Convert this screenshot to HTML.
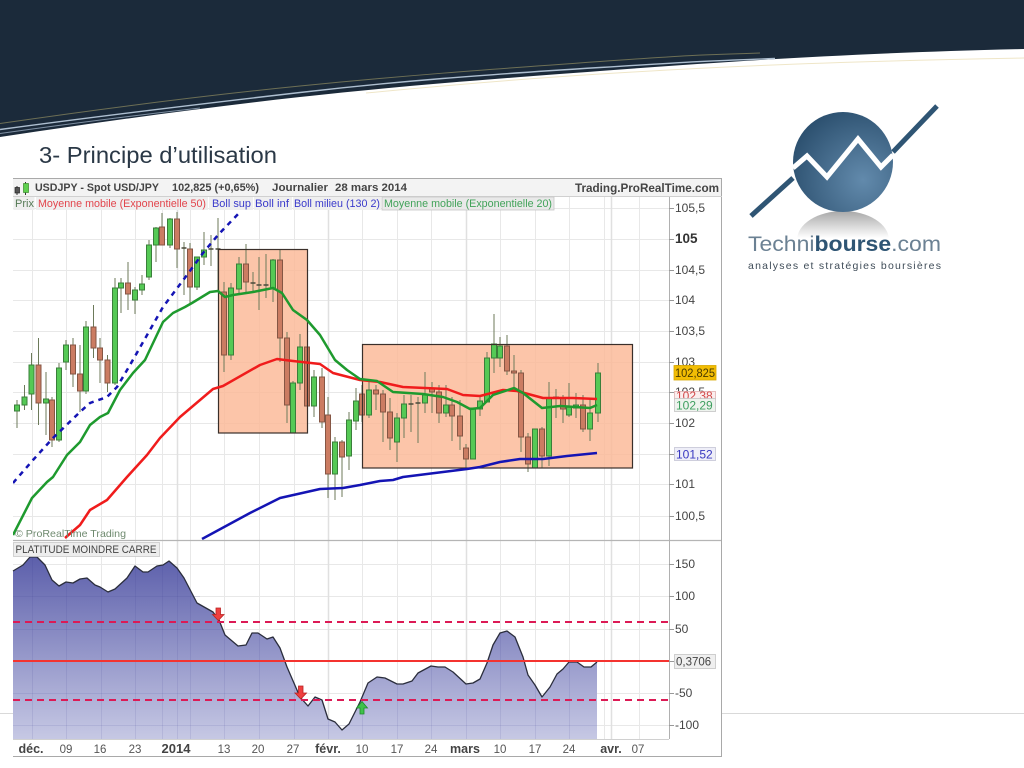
<!DOCTYPE html>
<html lang="fr"><head><meta charset="utf-8"><title>Principe d'utilisation</title>
<style>
html,body{margin:0;padding:0;background:#fff;width:1024px;height:768px;overflow:hidden}
svg{display:block;filter:blur(.35px)}
text{font-family:"Liberation Sans",Arial,sans-serif}
</style></head><body>
<svg xmlns="http://www.w3.org/2000/svg" width="1024" height="768" viewBox="0 0 1024 768">
<defs>
<linearGradient id="ind" x1="0" y1="557" x2="0" y2="739" gradientUnits="userSpaceOnUse"><stop offset="0" stop-color="#5c5fab"/><stop offset="1" stop-color="#c6c8e4"/></linearGradient>
<radialGradient id="ball" cx="863" cy="180" r="78" gradientUnits="userSpaceOnUse"><stop offset="0" stop-color="#628aac"/><stop offset="1" stop-color="#2b4f6e"/></radialGradient>
<linearGradient id="refl" x1="0" y1="211" x2="0" y2="238" gradientUnits="userSpaceOnUse"><stop offset="0" stop-color="#a8a8a8"/><stop offset="1" stop-color="#fff"/></linearGradient>
<clipPath id="main"><rect x="13" y="197" width="656" height="343"/></clipPath>
</defs>

<!-- header swoosh -->
<path d="M0 0H1024V49C850 53 720 62 600 71S400 86 300 97S100 122 0 137Z" fill="#1b2a3a"/>
<path d="M0 123.500C100 109 200 96 300 86S480 70 600 61.500S710 55 760 53" fill="none" stroke="#6d6f55" stroke-width="1"/>
<path d="M0 129.500C100 116 200 104 300 92.500S480 75 600 67.500S710 61 775 58.500" fill="none" stroke="#aebfd0" stroke-width="1.400"/>
<path d="M0 133.500C60 125 130 116 200 108" fill="none" stroke="#7f90a3" stroke-width="1"/>
<path d="M366 93C450 85 520 79 600 74S800 62 1024 58" fill="none" stroke="#efe6c8" stroke-width="1"/>

<!-- faint footer rule -->
<path d="M0 713.500H13M722 713.500H1024" stroke="#d9d9d9" stroke-width="1"/>

<!-- title -->
<text x="39" y="163" font-size="23.500" fill="#2a3846" textLength="238" lengthAdjust="spacingAndGlyphs">3- Principe d’utilisation</text>

<!-- logo -->
<ellipse cx="843" cy="240" rx="46" ry="29" fill="url(#refl)"/>
<rect x="780" y="238" width="130" height="34" fill="#fff"/>
<path d="M751 216L793 178M893 152L937 106" stroke="#2f5574" stroke-width="5" fill="none"/>
<circle cx="843" cy="162" r="50" fill="url(#ball)"/>
<path d="M793 168L807 156L827 177L858 139L881 167L893 155" stroke="#fff" stroke-width="5" fill="none"/>
<text x="748" y="251" font-size="21" fill="#6b8193" textLength="193" lengthAdjust="spacingAndGlyphs">Techni<tspan font-weight="bold" fill="#2f5574">bourse</tspan>.com</text>
<text x="748" y="269" font-size="10.500" fill="#3f4c58" textLength="193" lengthAdjust="spacing">analyses et stratégies boursières</text>

<!-- chart frame -->
<rect x="13" y="178" width="709" height="579" fill="#fff"/>
<rect x="13" y="178.500" width="709" height="18.500" fill="#f3f3f3"/>

<!-- grid -->
<g stroke="#e8e8e8" stroke-width="1" fill="none">
<path d="M32.500 197V739M66.500 197V739M101.500 197V739M135.500 197V739M162.500 197V739M190.500 197V739M224.500 197V739M259.500 197V739M294.500 197V739M362.500 197V739M397.500 197V739M431.500 197V739M500.500 197V739M535.500 197V739M569.500 197V739M604.500 197V739M639.500 197V739"/>
<path d="M13 208.500H669M13 239.500H669M13 270.500H669M13 300.500H669M13 331.500H669M13 362.500H669M13 392.500H669M13 423.500H669M13 454.500H669M13 484.500H669M13 516.500H669M13 564.500H669M13 596.500H669M13 629.500H669M13 693.500H669M13 725.500H669"/>
</g>
<g stroke="#e0e0e0" stroke-width="1.500" fill="none">
<path d="M177.500 197V739M328.500 197V739M466.500 197V739M611.500 197V739"/>
</g>

<!-- highlight rectangles fill -->
<rect x="218.500" y="249.500" width="89" height="183.500" fill="#fbb896" fill-opacity=".82"/>
<rect x="362.500" y="344.500" width="270" height="123.500" fill="#fbb896" fill-opacity=".82"/>

<!-- candles -->
<g clip-path="url(#main)">
<path fill="none" stroke="#6c7a5a" stroke-width="1" d="M17 400V428M24.500 385V410M31.500 353V410M38.500 338V425M46 372V435M52 397V447M59 363V442M66 340V370M73 338V387M80 345V412M86 321V394M93.500 305V358M100 338V383M107.500 355V392M115 278V385M121 278V313M128 262V310M135 287V314M142 275V295M149 240V280M156 227V262M162 213V245M170 218V248M177 212V268M184 242V295M190 243V305M197 257V290M204 232V265M211 235V266M218 218V292M224 282V372M231 283V360M239 257V293M246 244V292M253 272V293M259 257V310M266 254V298M273 259V302M280 249V362M287 332V423M293 381V433M300 334V390M307 347V406M314 370V417M322 368V428M328 397V498M335 437V500M342 440V497M349 412V470M356 388V430M362 385V422M369 382V418M376 385V410M383 390V442M390 398V450M397 413V462M404 395V438M411 395V432M418 397V443M425 372V413M432 382V413M439 385V423M446 385V417M452 397V441M460 400V450M466 444V470M473 408V459M480 397V416M487 352V402M494 314V373M500 337V367M507 335V375M514 355V389M521 370V452M528 433V472M535 429V468M542 427V468M549 382V466M556 389V418M563 395V423M569 383V417M576 393V418M583 395V432M590 398V441M598 363V422"/>
<path fill="#55c955" stroke="#3a7f3a" stroke-width="1" d="M14.500 405h5v6h-5zM22 397h5v8h-5zM29 365h5v29h-5zM43.500 399h5v4h-5zM56.500 368h5v72h-5zM63.500 345h5v17h-5zM83.500 327h5v64h-5zM112.500 288h5v95h-5zM118.500 283h5v5h-5zM132.500 290h5v10h-5zM139.500 284h5v6h-5zM146.500 245h5v32h-5zM153.500 228h5v17h-5zM167.500 219h5v26h-5zM194.500 257h5v30h-5zM201.500 250h5v7h-5zM228.500 288h5v67h-5zM236.500 264h5v25h-5zM270.500 260h5v28h-5zM290.500 383h5v50h-5zM297.500 347h5v36h-5zM311.500 377h5v29h-5zM332.500 442h5v32h-5zM346.500 420h5v36h-5zM353.500 401h5v20h-5zM366.500 390h5v25h-5zM394.500 418h5v24h-5zM401.500 404h5v14h-5zM422.500 395h5v8h-5zM443.500 405h5v8h-5zM470.500 408h5v51h-5zM477.500 401h5v8h-5zM484.500 358h5v44h-5zM491.500 344h5v14h-5zM497.500 346h5v12h-5zM532.500 429h5v39h-5zM546.500 398h5v58h-5zM566.500 407h5v8h-5zM573.500 405h5v3h-5zM587.500 413h5v16h-5zM595.500 373h5v40h-5z"/>
<path fill="#cb7c62" stroke="#855644" stroke-width="1" d="M36 365h5v38h-5zM49.500 400h5v40h-5zM70.500 345h5v29h-5zM77.500 374h5v17h-5zM91 327h5v21h-5zM97.500 348h5v12h-5zM105 360h5v23h-5zM125.500 283h5v11h-5zM159.500 227h5v18h-5zM174.500 219h5v30h-5zM187.500 249h5v38h-5zM221.500 292h5v63h-5zM243.500 264h5v18h-5zM277.500 260h5v78h-5zM284.500 338h5v67h-5zM304.500 347h5v59h-5zM319.500 377h5v45h-5zM325.500 415h5v59h-5zM339.500 442h5v15h-5zM359.500 394h5v21h-5zM373.500 390h5v4h-5zM380.500 394h5v18h-5zM387.500 412h5v26h-5zM429.500 389h5v3h-5zM436.500 392h5v21h-5zM449.500 405h5v11h-5zM457.500 416h5v20h-5zM463.500 448h5v11h-5zM504.500 346h5v25h-5zM511.500 371h5v2h-5zM518.500 373h5v64h-5zM525.500 437h5v27h-5zM539.500 429h5v27h-5zM553.500 397h5v1h-5zM560.500 398h5v11h-5zM580.500 405h5v24h-5z"/>
<path fill="none" stroke="#4a4a3a" stroke-width="1.500" d="M181.500 248h5M208.500 249h5M215.500 249h5M250.500 283h5M256.500 285h5M263.500 285h5M408.500 404h5M415.500 403h5"/>
</g>

<!-- rect borders -->
<rect x="218.500" y="249.500" width="89" height="183.500" fill="none" stroke="#3a2f2a" stroke-width="1.200"/>
<rect x="362.500" y="344.500" width="270" height="123.500" fill="none" stroke="#3a2f2a" stroke-width="1.200"/>

<!-- indicator lines on price -->
<g clip-path="url(#main)" fill="none" stroke-linejoin="round">
<polyline stroke="#1414b4" stroke-width="2.500" stroke-dasharray="5 5" points="13,483 33,460 53,438 80,412 90,403 107,397 117,387 130,365 163,307 187,275 203,253 218,235 240,212"/>
<polyline stroke="#1414b4" stroke-width="2.500" points="202,539 250,513 280,498 320,489 343,488 360,485 380,481 393,480 403,477 467,469 480,467 500,462 520,459 543,459 567,456 597,453"/>
<polyline stroke="#f01c1c" stroke-width="2.500" points="65,538 80,525 90,510 107,500 127,477 147,455 160,438 180,417 213,389 223,386 260,365 277,359 293,361 320,364 333,373 360,380 380,382 403,387 447,389 463,395 480,396 503,390 517,391 543,398 573,398 597,399"/>
<polyline stroke="#1e9a2e" stroke-width="2.500" points="13,535 32,498 47,482 53,477 67,455 80,442 90,425 100,417 108,413 120,390 133,373 145,360 163,322 173,313 185,307 192,303 210,292 218,291 225,297 233,295 253,292 273,288 282,293 293,310 307,320 320,335 335,360 347,370 360,379 377,381 393,392 423,394 443,397 457,402 470,409 480,408 493,395 514,388 523,393 542,408 560,406 590,408 597,405"/>
</g>

<!-- watermark -->
<text x="15" y="537" font-size="10.500" fill="#6f8a6f" textLength="111" lengthAdjust="spacingAndGlyphs">© ProRealTime Trading</text>

<!-- separators -->
<path d="M13 540.500H722" stroke="#b5b5b5" stroke-width="1.200"/>

<!-- lower panel area -->
<path fill="url(#ind)" stroke="none" d="M13 571L23 565L30 557L37 557L45 565L52 580L59 586L66 582L73 583L80 579L87 578L95 585L100 587L108 592L115 589L127 578L135 566L143 572L148 572L157 566L163 565L169 561L177 568L184 578L197 603L213 612L219 620L225 635L238 646L246 645L252 633L258 633L267 639L273 637L280 648L287 667L300 697L308 706L315 697L322 700L328 719L335 722L342 730L349 724L360 702L368 683L377 677L385 678L397 684L403 684L412 681L418 673L431 666L438 667L445 667L453 672L466 684L473 683L480 679L487 663L493 645L500 633L507 631L515 637L523 657L528 675L535 685L542 697L550 687L557 674L563 669L569 662L577 662L584 667L591 667L597 662V739H13Z"/>
<path fill="none" stroke="#2a2d3c" stroke-width="1.300" stroke-linejoin="round" d="M13 571L23 565L30 557L37 557L45 565L52 580L59 586L66 582L73 583L80 579L87 578L95 585L100 587L108 592L115 589L127 578L135 566L143 572L148 572L157 566L163 565L169 561L177 568L184 578L197 603L213 612L219 620L225 635L238 646L246 645L252 633L258 633L267 639L273 637L280 648L287 667L300 697L308 706L315 697L322 700L328 719L335 722L342 730L349 724L360 702L368 683L377 677L385 678L397 684L403 684L412 681L418 673L431 666L438 667L445 667L453 672L466 684L473 683L480 679L487 663L493 645L500 633L507 631L515 637L523 657L528 675L535 685L542 697L550 687L557 674L563 669L569 662L577 662L584 667L591 667L597 662"/>
<!-- grid through the area -->
<g stroke="#33358a" stroke-opacity=".1" stroke-width="1" fill="none">
<path d="M32.500 557V739M66.500 582V739M101.500 587V739M135.500 566V739M162.500 565V739M177.500 568V739M190.500 590V739M224.500 633V739M259.500 633V739M294.500 684V739M328.500 719V739M362.500 695V739M397.500 684V739M431.500 666V739M466.500 684V739M500.500 633V739M535.500 685V739M569.500 662V739"/>
<path d="M13 596.500H200M13 629.500H222M13 693.500H300M13 725.500H597"/>
</g>
<!-- level lines -->
<path d="M13 622H669M13 700H669" stroke="#dc1a55" stroke-width="2" stroke-dasharray="7 5" fill="none"/>
<path d="M13 661H669" stroke="#f4332f" stroke-width="2" fill="none"/>
<!-- arrows -->
<path d="M216 608h4.500v6.500h3.500l-5.700 6l-5.800-6h3.500z" fill="#ef4040" stroke="#b92222" stroke-width=".8"/>
<path d="M298.500 686h4.500v7h3.500l-5.700 6l-5.800-6h3.500z" fill="#ef4040" stroke="#b92222" stroke-width=".8"/>
<path d="M360 714v-6h-3.500l5.500-6.500l5.500 6.500h-3.500v6z" fill="#3fc24a" stroke="#1f8a2a" stroke-width=".8"/>

<!-- plot edges and frame -->
<path d="M669.500 197V739" stroke="#b0b0b0" stroke-width="1"/>
<path d="M13 739.500H669" stroke="#d0d0d0" stroke-width="1"/>
<path d="M13 178.500H721.500V756.500H13" fill="none" stroke="#a9a9a9" stroke-width="1"/>
<path d="M13 196.500H722" stroke="#d0d0d0" stroke-width="1" fill="none"/>

<!-- title bar -->
<g>
<path d="M17 186v9M25.500 182v13" stroke="#333" stroke-width="1"/>
<rect x="15" y="187.500" width="4.500" height="5.500" fill="#555" stroke="#222" stroke-width=".7"/>
<rect x="23.500" y="183.500" width="5" height="9" fill="#5fd04f" stroke="#3a8a2a" stroke-width=".7"/>
<text x="35" y="191" font-size="11" font-weight="bold" fill="#444" textLength="124" lengthAdjust="spacingAndGlyphs">USDJPY - Spot USD/JPY</text>
<text x="172" y="191" font-size="11" font-weight="bold" fill="#444" textLength="87" lengthAdjust="spacingAndGlyphs">102,825 (+0,65%)</text>
<text x="272" y="191" font-size="11" font-weight="bold" fill="#444" textLength="56" lengthAdjust="spacingAndGlyphs">Journalier</text>
<text x="335" y="191" font-size="11" font-weight="bold" fill="#444" textLength="72" lengthAdjust="spacingAndGlyphs">28 mars 2014</text>
<text x="575" y="192" font-size="11.500" font-weight="bold" fill="#444" textLength="144" lengthAdjust="spacingAndGlyphs">Trading.ProRealTime.com</text>
</g>

<!-- legend -->
<g>
<rect x="13.500" y="197" width="21" height="13" fill="#eeeeee"/>
<rect x="36" y="197" width="172" height="13" fill="#efefef"/>
<rect x="209" y="197" width="44" height="13" fill="#efefef"/>
<rect x="254" y="197" width="38" height="13" fill="#efefef"/>
<rect x="293" y="197" width="88" height="13" fill="#efefef"/>
<rect x="382" y="197" width="172" height="13" fill="#e9e9e9" stroke="#c6c6c6" stroke-width=".8"/>
<g font-size="11">
<text x="15" y="207" fill="#557a55" textLength="19" lengthAdjust="spacingAndGlyphs">Prix</text>
<text x="38" y="207" fill="#e2454c" textLength="168" lengthAdjust="spacingAndGlyphs">Moyenne mobile (Exponentielle 50)</text>
<text x="212" y="207" fill="#3a3acb" textLength="39" lengthAdjust="spacingAndGlyphs">Boll sup</text>
<text x="255" y="207" fill="#3a3acb" textLength="34" lengthAdjust="spacingAndGlyphs">Boll inf</text>
<text x="294" y="207" fill="#3a3acb" textLength="86" lengthAdjust="spacingAndGlyphs">Boll milieu (130 2)</text>
<text x="384" y="207" fill="#42a35a" textLength="168" lengthAdjust="spacingAndGlyphs">Moyenne mobile (Exponentielle 20)</text>
</g>
</g>

<!-- platitude label -->
<rect x="13.500" y="542.500" width="146" height="14" fill="#ededed" stroke="#c8c8c8" stroke-width=".8"/>
<text x="15.500" y="553" font-size="11" fill="#444" textLength="141" lengthAdjust="spacingAndGlyphs">PLATITUDE MOINDRE CARRE</text>

<!-- right axis -->
<path d="M669 208.500h5M669 239.500h5M669 270.500h5M669 300.500h5M669 331.500h5M669 362.500h5M669 392.500h5M669 423.500h5M669 454.500h5M669 484.500h5M669 516.500h5M669 564.500h5M669 596.500h5M669 629.500h5M669 661.500h5M669 693.500h5M669 725.500h5" stroke="#999" stroke-width="1"/>
<g font-size="12" fill="#444">
<text x="675" y="212">105,5</text>
<text x="675" y="243" font-size="13.500" font-weight="bold" fill="#333">105</text>
<text x="675" y="274">104,5</text>
<text x="675" y="304">104</text>
<text x="675" y="335">103,5</text>
<text x="675" y="366">103</text>
<text x="675" y="396">102,5</text>
<text x="675" y="427">102</text>
<text x="675" y="488">101</text>
<text x="675" y="520">100,5</text>
<text x="675" y="568">150</text>
<text x="675" y="600">100</text>
<text x="675" y="633">50</text>
<text x="675" y="697">-50</text>
<text x="675" y="729">-100</text>
</g>
<rect x="674" y="365.500" width="42" height="14.500" fill="#f2bd04" stroke="#d8a800" stroke-width=".8"/>
<text x="675" y="377" font-size="12" fill="#4a3a00" textLength="40" lengthAdjust="spacingAndGlyphs">102,825</text>
<rect x="674.500" y="391.500" width="41" height="8" fill="#fbeeee" stroke="#e0b0b0" stroke-width=".8"/>
<text x="676" y="400" font-size="12" fill="#d24a4a">102,38</text>
<rect x="674.500" y="398.500" width="41" height="13" fill="#eef3ee" stroke="#c4c4c4" stroke-width=".8"/>
<text x="676" y="409.500" font-size="12" fill="#3f9f60">102,29</text>
<rect x="674.500" y="447.500" width="41" height="13" fill="#eeeef8" stroke="#c4c4d4" stroke-width=".8"/>
<text x="676" y="458.500" font-size="12" fill="#3838c0">101,52</text>
<rect x="674.500" y="654.500" width="41" height="14" fill="#efefef" stroke="#c4c4c4" stroke-width=".8"/>
<text x="676" y="665.500" font-size="11.500" fill="#444">0,3706</text>

<!-- date axis -->
<g font-size="11.500" fill="#555" text-anchor="middle">
<text x="31" y="753" font-size="12.500" font-weight="bold" fill="#444">déc.</text>
<text x="66" y="753">09</text><text x="100" y="753">16</text><text x="135" y="753">23</text>
<text x="176" y="753" font-size="13" font-weight="bold" fill="#444">2014</text>
<text x="224" y="753">13</text><text x="258" y="753">20</text><text x="293" y="753">27</text>
<text x="328" y="753" font-size="12.500" font-weight="bold" fill="#444">févr.</text>
<text x="362" y="753">10</text><text x="397" y="753">17</text><text x="431" y="753">24</text>
<text x="465" y="753" font-size="12.500" font-weight="bold" fill="#444">mars</text>
<text x="500" y="753">10</text><text x="535" y="753">17</text><text x="569" y="753">24</text>
<text x="611" y="753" font-size="12.500" font-weight="bold" fill="#444">avr.</text>
<text x="638" y="753">07</text>
</g>
</svg>
</body></html>
